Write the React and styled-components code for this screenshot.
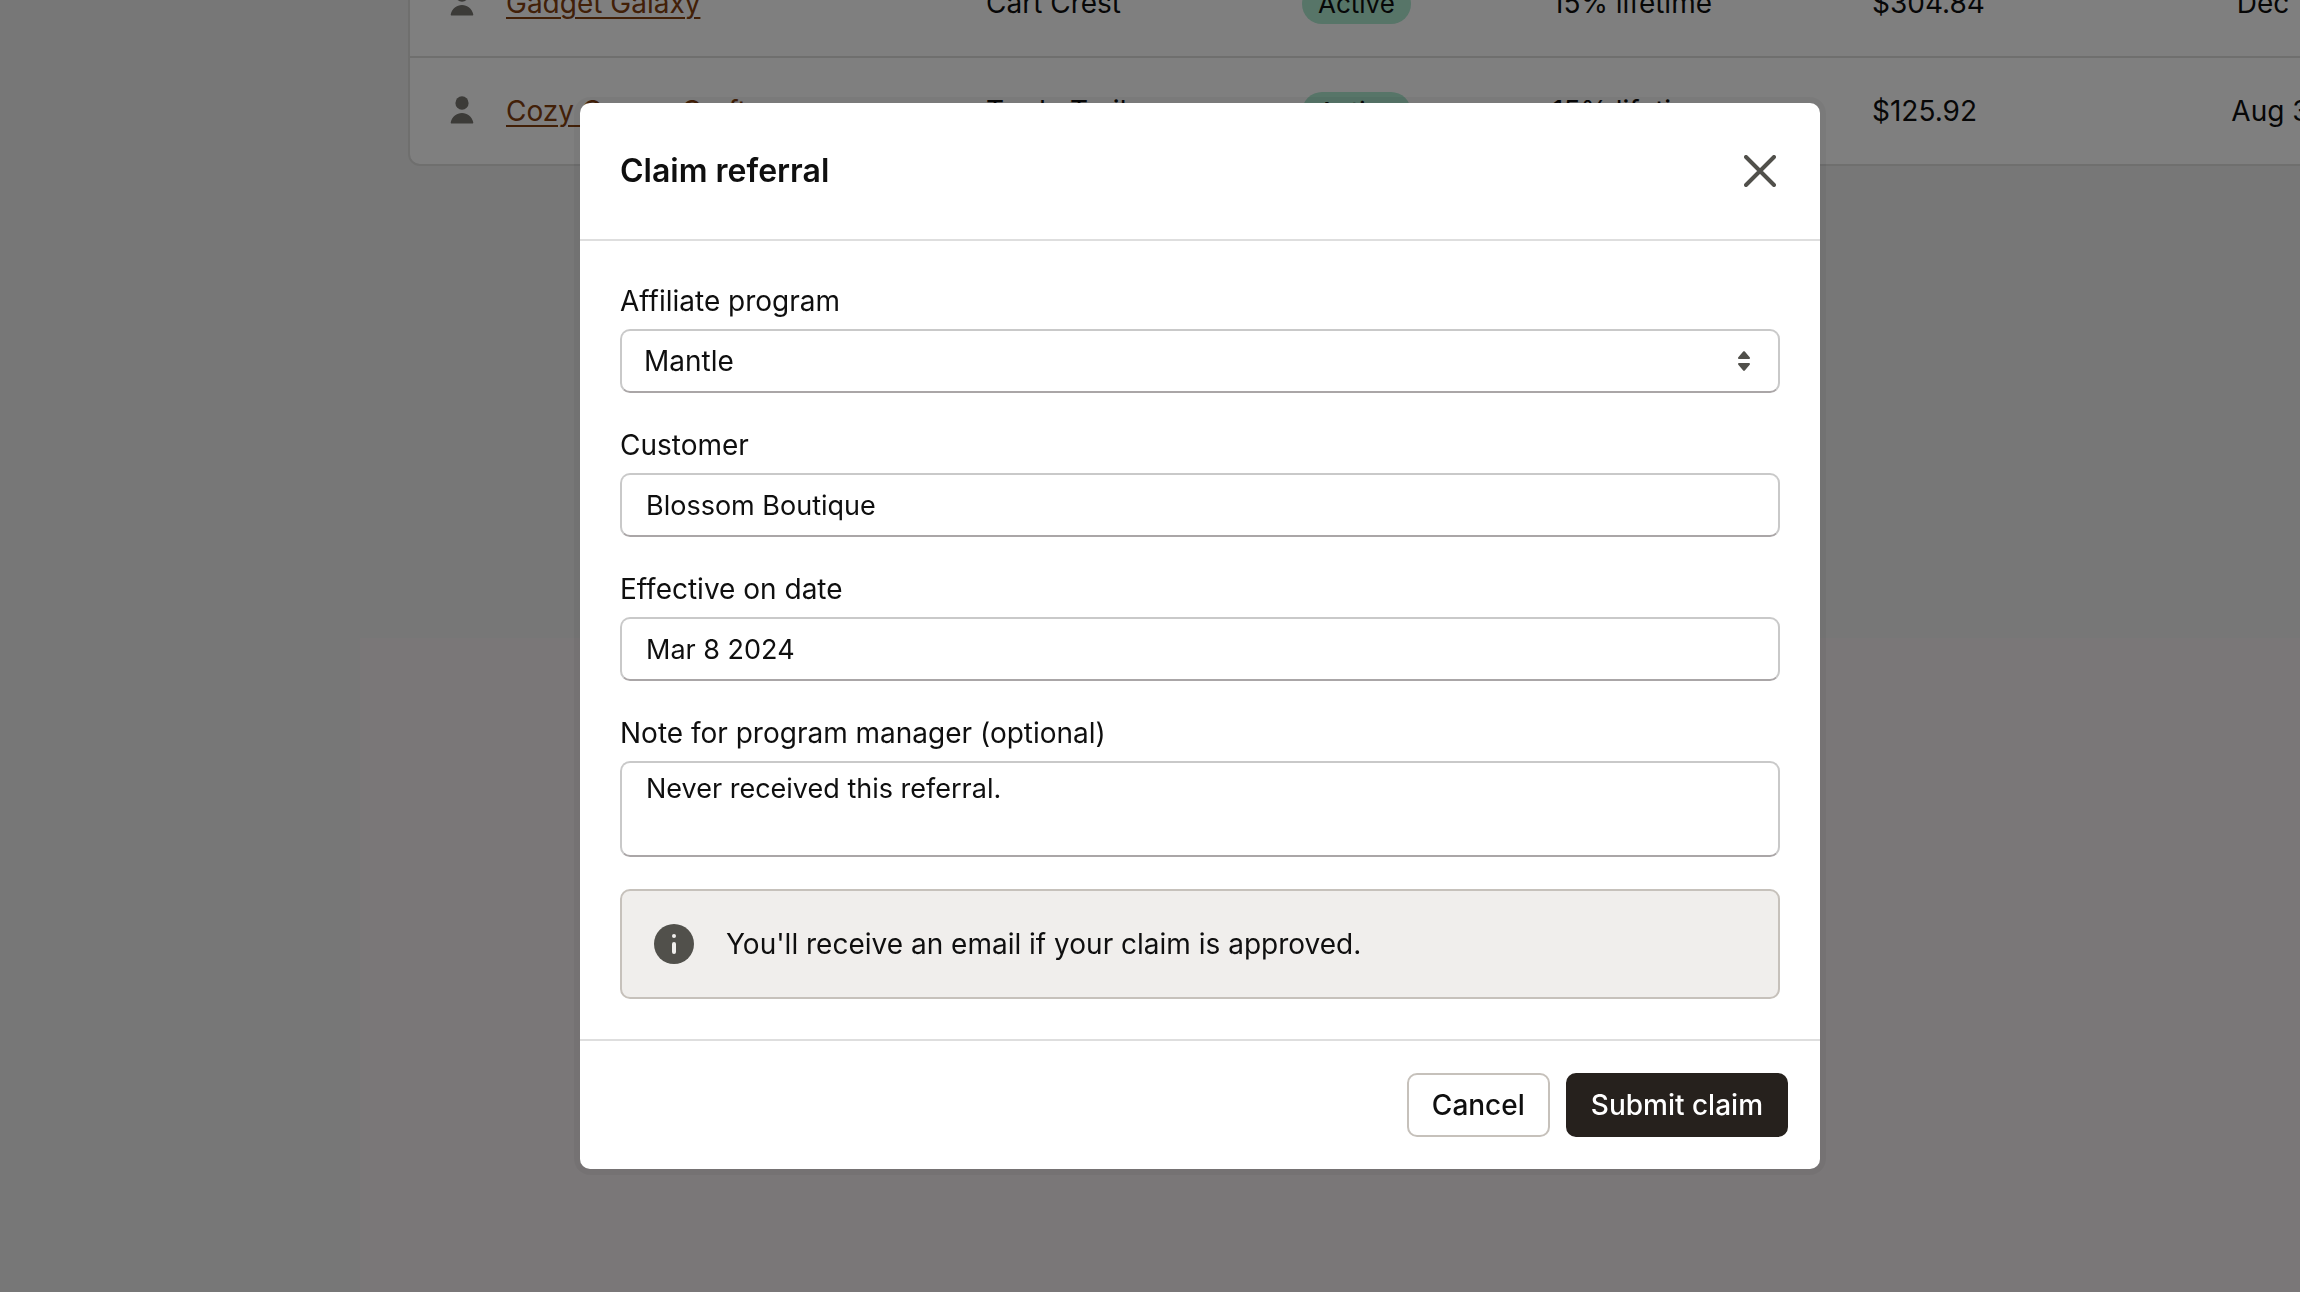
import React, { useState } from "react";
import styled, { createGlobalStyle } from "styled-components";

const referrals = [
  {
    name: "Gadget Galaxy",
    app: "Cart Crest",
    status: "Active",
    rate: "15% lifetime",
    earned: "$304.84",
    date: "Dec 17, 2023",
  },
  {
    name: "Cozy Corner Crafts",
    app: "Trade Trail",
    status: "Active",
    rate: "15% lifetime",
    earned: "$125.92",
    date: "Aug 31, 2023",
  },
];

const PersonIcon = () => (
  <svg width="24" height="32" viewBox="0 0 24 32" fill="#787671">
    <ellipse cx="12" cy="8" rx="6.6" ry="6.8" />
    <path d="M0.8 27C2.2 21.600 6.600 18 12 18s9.800 3.600 11.200 9c.3 1.300-.2 1.500-1 1.500H1.800c-.8 0-1.300-.2-1-1.500Z" />
  </svg>
);

const CloseIcon = () => (
  <svg
    width="32"
    height="32"
    viewBox="0 0 32 32"
    stroke="#51504b"
    strokeWidth="4"
    strokeLinecap="round"
  >
    <path d="M2 2l28 28M30 2L2 30" />
  </svg>
);

const SortIcon = () => (
  <svg width="12" height="20" viewBox="0 0 12 20" fill="#51504b">
    <path d="M5.200.5c.4-.5 1.200-.5 1.600 0l4.900 5.700c.6.7.1 1.800-.8 1.800H1.100C.2 8-.3 6.900.3 6.200L5.200.5Z" />
    <path d="M5.200 19.500c.4.500 1.200.5 1.600 0l4.900-5.700c.6-.7.1-1.800-.8-1.800H1.100c-.9 0-1.400 1.100-.8 1.800l4.900 5.700Z" />
  </svg>
);

const InfoIcon = () => (
  <svg width="40" height="40" viewBox="0 0 40 40">
    <circle cx="20" cy="20" r="20" fill="#51504b" />
    <circle cx="20" cy="12" r="2" fill="#f0eeec" />
    <rect x="18" y="18" width="4" height="12" rx="2" fill="#f0eeec" />
  </svg>
);

const App = () => {
  const [program, setProgram] = useState("Mantle");
  const [customer, setCustomer] = useState("Blossom Boutique");
  const [date, setDate] = useState("Mar 8 2024");
  const [note, setNote] = useState("Never received this referral.");

  return (
    <>
      <GlobalStyle />
      <Page>
        <TableArea>
          <Card>
            <Table>
              <colgroup>
                <Col $width={96} />
                <Col $width={480} />
                <Col $width={316} />
                <Col $width={250} />
                <Col $width={320} />
                <Col $width={330} />
                <Col $width={244} />
              </colgroup>
              <tbody>
                {referrals.map((row) => (
                  <Row key={row.name}>
                    <IconCell>
                      <PersonIcon />
                    </IconCell>
                    <Cell>
                      <ShopLink href="#">{row.name}</ShopLink>
                    </Cell>
                    <Cell>{row.app}</Cell>
                    <Cell>
                      <Badge>{row.status}</Badge>
                    </Cell>
                    <Cell>{row.rate}</Cell>
                    <Cell>{row.earned}</Cell>
                    <Cell $right>{row.date}</Cell>
                  </Row>
                ))}
              </tbody>
            </Table>
          </Card>
        </TableArea>
        <LowerPanel />
      </Page>
      <Overlay>
        <Modal role="dialog" aria-labelledby="claim-title">
          <Header>
            <Title id="claim-title">Claim referral</Title>
            <CloseButton type="button" aria-label="Close">
              <CloseIcon />
            </CloseButton>
          </Header>
          <Form id="claim-form" onSubmit={(ev) => ev.preventDefault()}>
            <Field>
              <Label htmlFor="program">Affiliate program</Label>
              <SelectWrapper>
                <Select
                  id="program"
                  value={program}
                  onChange={(ev) => setProgram(ev.currentTarget.value)}
                >
                  <option>Mantle</option>
                </Select>
                <SelectArrows>
                  <SortIcon />
                </SelectArrows>
              </SelectWrapper>
            </Field>
            <Field>
              <Label htmlFor="customer">Customer</Label>
              <Input
                id="customer"
                type="text"
                value={customer}
                onChange={(ev) => setCustomer(ev.currentTarget.value)}
              />
            </Field>
            <Field>
              <Label htmlFor="date">Effective on date</Label>
              <Input
                id="date"
                type="text"
                value={date}
                onChange={(ev) => setDate(ev.currentTarget.value)}
              />
            </Field>
            <Field>
              <Label htmlFor="note">Note for program manager (optional)</Label>
              <Textarea
                id="note"
                value={note}
                onChange={(ev) => setNote(ev.currentTarget.value)}
              />
            </Field>
            <Banner>
              <InfoIcon />
              <span>You'll receive an email if your claim is approved.</span>
            </Banner>
          </Form>
          <Footer>
            <Button type="button">Cancel</Button>
            <Button type="submit" form="claim-form" $primary>
              Submit claim
            </Button>
          </Footer>
        </Modal>
      </Overlay>
    </>
  );
};

export default App;

const GlobalStyle = createGlobalStyle`
  *, *::before, *::after {
    box-sizing: border-box;
  }
  body {
    margin: 0;
    overflow: hidden;
    color: #0f0f0f;
    font-family: Inter, "Liberation Sans", sans-serif;
    font-size: 28px;
    line-height: 40px;
  }
  button, input, select, textarea {
    color: inherit;
    font: inherit;
  }
  svg {
    display: block;
    flex-shrink: 0;
  }
`;

const Page = styled.div`
  display: flex;
  flex-direction: column;
  height: 100vh;
  overflow: hidden;
  background-color: #eeefee;
`;

/* scrolled list, only its last rows are in view */
const TableArea = styled.div`
  display: flex;
  flex-direction: column;
  justify-content: flex-end;
  flex-shrink: 0;
  height: 166px;
  margin-bottom: 472px;
  padding-left: 408px;
  overflow: hidden;
`;

const Card = styled.div`
  flex-shrink: 0;
  width: max-content;
  border: 2px solid #dededd;
  border-radius: 12px;
  background-color: #fff;
`;

const Table = styled.table`
  width: 2036px;
  table-layout: fixed;
  border-collapse: collapse;
`;

const Col = styled.col`
  width: ${(props) => props.$width}px;
`;

const Row = styled.tr`
  height: 107px;
  & + & {
    border-top: 2px solid #dededd;
  }
`;

const Cell = styled.td`
  padding: 0;
  padding-right: ${(props) => (props.$right ? "40px" : "0")};
  text-align: ${(props) => (props.$right ? "right" : "left")};
  white-space: nowrap;
`;

const IconCell = styled(Cell)`
  padding-left: 40px;
`;

const ShopLink = styled.a`
  color: #84400f;
  text-decoration: underline;
  text-decoration-thickness: 2px;
  text-underline-offset: 4px;
`;

const Badge = styled.span`
  display: inline-block;
  padding: 0 16px;
  border-radius: 20px;
  background-color: #aeead1;
  font-size: 26px;
`;

const LowerPanel = styled.div`
  flex: 1;
  margin-left: 360px;
  background-color: #f5eff0;
`;

const Overlay = styled.div`
  position: fixed;
  inset: 0;
  display: flex;
  align-items: center;
  justify-content: center;
  padding: 0 0 20px 100px;
  background-color: rgba(0, 0, 0, 0.5);
`;

const Modal = styled.div`
  width: 100%;
  max-width: 1240px;
  border-radius: 10px;
  background-color: #fff;
  box-shadow: 0 0 0 6px rgba(0, 0, 0, 0.04);
`;

const Header = styled.div`
  display: flex;
  align-items: center;
  justify-content: space-between;
  padding: 48px 44px 48px 40px;
  border-bottom: 2px solid #dedede;
`;

const Title = styled.h2`
  margin: 0;
  font-size: 32px;
  font-weight: 600;
  line-height: 40px;
`;

const CloseButton = styled.button`
  padding: 0;
  border: none;
  background: none;
`;

const Form = styled.form`
  display: flex;
  flex-direction: column;
  gap: 32px;
  padding: 40px;
`;

const Field = styled.div`
  display: flex;
  flex-direction: column;
  gap: 8px;
`;

const Label = styled.label`
  line-height: 40px;
`;

const Input = styled.input`
  width: 100%;
  height: 64px;
  padding: 0 24px;
  border: 2px solid #c9c9c9;
  border-bottom-color: #aaa6a7;
  border-radius: 10px;
  outline: none;
  background-color: #fff;
  font-size: 27px;
`;

const SelectWrapper = styled.div`
  position: relative;
`;

const Select = styled(Input).attrs({ as: "select" })`
  display: block;
  padding: 0 22px;
  appearance: none;
  font-size: 28px;
`;

const SelectArrows = styled.span`
  position: absolute;
  top: 22px;
  right: 30px;
  pointer-events: none;
`;

const Textarea = styled(Input).attrs({ as: "textarea" })`
  height: 96px;
  padding: 6px 24px;
  resize: none;
`;

const Banner = styled.div`
  display: flex;
  align-items: center;
  gap: 32px;
  padding: 33px 32px;
  border: 2px solid #c6c1bb;
  border-radius: 10px;
  background-color: #f0eeec;
`;

const Footer = styled.div`
  display: flex;
  justify-content: flex-end;
  gap: 16px;
  padding: 32px;
  border-top: 2px solid #dedede;
`;

const Button = styled.button`
  height: 64px;
  padding: 0 23px;
  border: 2px solid ${(props) => (props.$primary ? "#26211d" : "#c6c1bb")};
  border-radius: 10px;
  background-color: ${(props) => (props.$primary ? "#26211d" : "#fff")};
  color: ${(props) => (props.$primary ? "#fff" : "#0f0f0f")};
  font-weight: 500;
`;
